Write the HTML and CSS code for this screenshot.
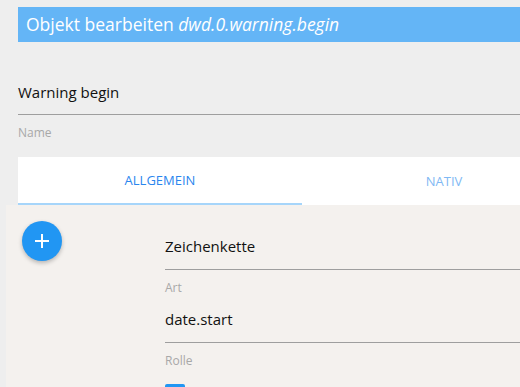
FILE: index.html
```html
<!DOCTYPE html>
<html lang="de">
<head>
<meta charset="utf-8">
<link rel="stylesheet" href="styles.css">
</head>
<body>
<div class="dialog">
  <div class="title">Objekt bearbeiten <i>dwd.0.warning.begin</i></div>
  <div class="name-field">
    <div class="value">Warning begin</div>
    <div class="label">Name</div>
  </div>
  <div class="tabs">
    <div class="tab active">ALLGEMEIN</div>
    <div class="tab">NATIV</div>
  </div>
  <div class="content">
    <div class="fab-col">
      <button class="fab" aria-label="add">
        <svg width="16" height="16" viewBox="0 0 16 16"><path d="M8 1v14M1 8h14" stroke="#fff" stroke-width="2"/></svg>
      </button>
    </div>
    <div class="fields">
      <div class="field">
        <div class="value">Zeichenkette</div>
        <div class="label">Art</div>
      </div>
      <div class="field">
        <div class="value">date.start</div>
        <div class="label">Rolle</div>
      </div>
      <div class="checkbox"></div>
    </div>
  </div>
</div>
</body>
</html>
```
FILE: styles.css
```css
html, body {
  margin: 0;
  padding: 0;
  background: #eeeeee;
  font-family: "Open Sans", "Noto Sans", sans-serif;
  overflow: hidden;
  height: 387px;
}
.dialog {
  padding-top: 7px;
  overflow: hidden;
}
.title {
  margin-left: 18px;
  height: 35px;
  line-height: 35px;
  background: #64b5f6;
  color: #fff;
  font-size: 17.5px;
  padding-left: 8px;
  white-space: nowrap;
}
.name-field {
  margin-left: 18px;
  padding-top: 37px;
}
.value {
  font-size: 15px;
  color: #111;
  height: 36px;
  line-height: 26px;
  border-bottom: 1px solid #9e9e9e;
  box-sizing: border-box;
}
.label {
  font-size: 12px;
  color: #a8a8a8;
  height: 36px;
  line-height: 36px;
}
.name-field .label {
  height: 42px;
}
.tabs {
  margin-left: 18px;
  display: flex;
  background: #fff;
  height: 48px;
  overflow: hidden;
}
.tab {
  width: 284px;
  flex: none;
  text-align: center;
  line-height: 48px;
  font-size: 13px;
  color: #7fb9f4;
  box-sizing: border-box;
}
.tab.active {
  color: #2a86ee;
  border-bottom: 2px solid #a6d5fa;
  line-height: 46px;
}
.content {
  margin-left: 6px;
  background: #f4f1ee;
  height: 182px;
  display: flex;
}
.fab-col {
  width: 159px;
  flex: none;
  padding-top: 16px;
  padding-left: 16px;
  box-sizing: border-box;
}
.fab {
  width: 40px;
  height: 40px;
  border-radius: 50%;
  border: none;
  background: #2196f3;
  box-shadow: 0 2px 4px rgba(0,0,0,0.25);
  display: flex;
  align-items: center;
  justify-content: center;
  padding: 0;
}
.fab svg {
  display: block;
}
.fields {
  flex: 1;
  padding-top: 28px;
}
.field .value {
  height: 37px;
}
.checkbox {
  width: 20px;
  height: 20px;
  margin-top: 5px;
  background: #2196f3;
  border-radius: 2px;
}
```
